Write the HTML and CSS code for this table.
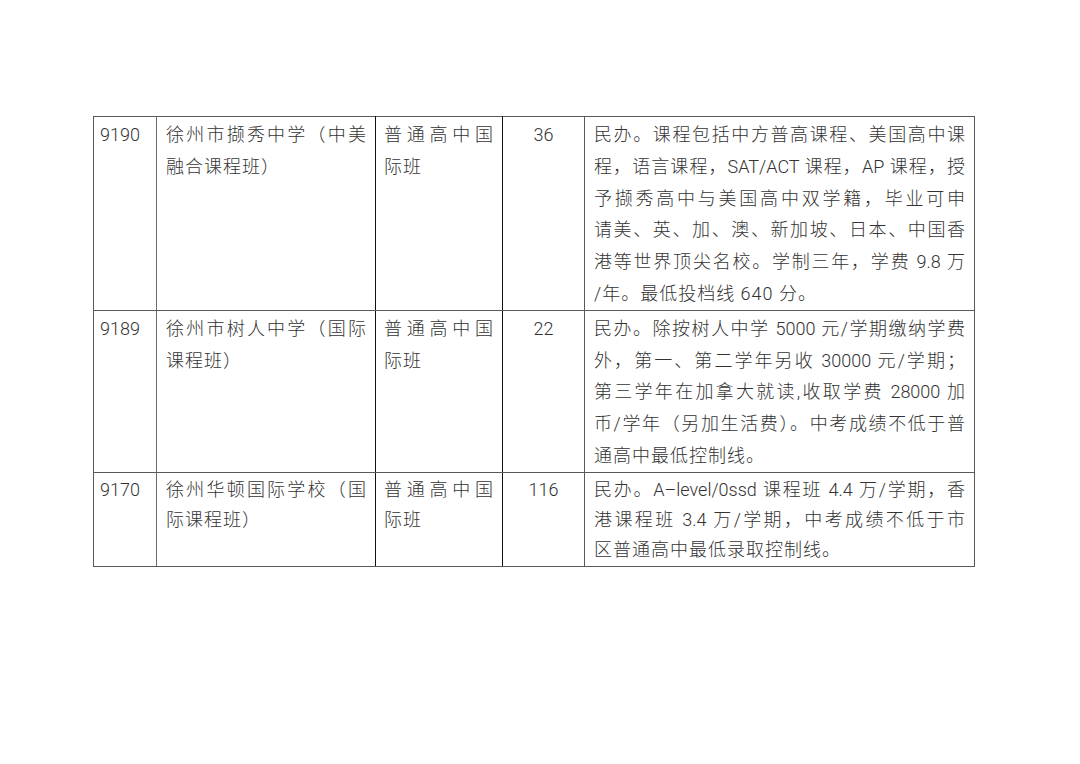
FILE: index.html
```html
<!DOCTYPE html>
<html lang="zh-CN">
<head>
<meta charset="utf-8">
<title>国际课程班</title>
<link rel="stylesheet" href="styles.css">
</head>
<body>
<div class="page">
  <table class="grid">
    <colgroup>
      <col class="c-code">
      <col class="c-name">
      <col class="c-type">
      <col class="c-num">
      <col class="c-note">
    </colgroup>
    <tbody>
      <tr class="r1">
        <td class="code">9190</td>
        <td class="name"><div class="ln">徐州市撷秀中学（中美</div><div class="ln end">融合课程班）</div></td>
        <td class="type"><div class="ln">普通高中国</div><div class="ln end">际班</div></td>
        <td class="num">36</td>
        <td class="note">
          <div class="ln">民办。课程包括中方普高课程、美国高中课</div>
          <div class="ln">程，语言课程，SAT/ACT 课程，AP 课程，授</div>
          <div class="ln">予撷秀高中与美国高中双学籍，毕业可申</div>
          <div class="ln">请美、英、加、澳、新加坡、日本、中国香</div>
          <div class="ln">港等世界顶尖名校。学制三年，学费 9.8 万</div>
          <div class="ln end">/年。最低投档线 640 分。</div>
        </td>
      </tr>
      <tr class="r2">
        <td class="code">9189</td>
        <td class="name"><div class="ln">徐州市树人中学（国际</div><div class="ln end">课程班）</div></td>
        <td class="type"><div class="ln">普通高中国</div><div class="ln end">际班</div></td>
        <td class="num">22</td>
        <td class="note">
          <div class="ln">民办。除按树人中学 5000 元/学期缴纳学费</div>
          <div class="ln">外，第一、第二学年另收 30000 元/学期；</div>
          <div class="ln">第三学年在加拿大就读,收取学费 28000 加</div>
          <div class="ln">币/学年（另加生活费）。中考成绩不低于普</div>
          <div class="ln end">通高中最低控制线。</div>
        </td>
      </tr>
      <tr class="r3">
        <td class="code">9170</td>
        <td class="name"><div class="ln">徐州华顿国际学校（国</div><div class="ln end">际课程班）</div></td>
        <td class="type"><div class="ln">普通高中国</div><div class="ln end">际班</div></td>
        <td class="num">116</td>
        <td class="note">
          <div class="ln">民办。A–level/0ssd 课程班 4.4 万/学期，香</div>
          <div class="ln">港课程班 3.4 万/学期，中考成绩不低于市</div>
          <div class="ln end">区普通高中最低录取控制线。</div>
        </td>
      </tr>
    </tbody>
  </table>
</div>
</body>
</html>
```

FILE: styles.css
```css
html, body {
  margin: 0;
  padding: 0;
  background: #ffffff;
}

.page {
  padding: 116px 0 0 93px;
}

.grid {
  border-collapse: collapse;
  table-layout: fixed;
  width: 881px;
  font-family: Roboto, "Noto Sans CJK SC", sans-serif;
  font-size: 18px;
  font-weight: 300;
  color: #333333;
  border: 1px solid #5a5a5a;
}

.c-code { width: 63px; }
.c-name { width: 219px; }
.c-type { width: 127px; }
.c-num { width: 82px; }
.c-note { width: 390px; }

.grid td {
  vertical-align: top;
  padding: 2px 9px 0 9px;
  line-height: 31.8px;
  border: 1px solid #5a5a5a;
  text-align: justify;
}

.grid td.code {
  padding-left: 6px;
  border-right-color: #6a6a6a;
}

.grid td.name {
  border-right-color: #111111;
}

.grid td.type {
  padding-left: 8px;
  border-right-color: #111111;
}

.grid td.num {
  text-align: center;
  padding: 2px 0 0 0;
}

.ln {
  white-space: nowrap;
  text-align: justify;
  text-align-last: justify;
}

.ln.end {
  text-align-last: left;
  letter-spacing: 1px;
}

.r3 td { line-height: 30.3px; }
```
